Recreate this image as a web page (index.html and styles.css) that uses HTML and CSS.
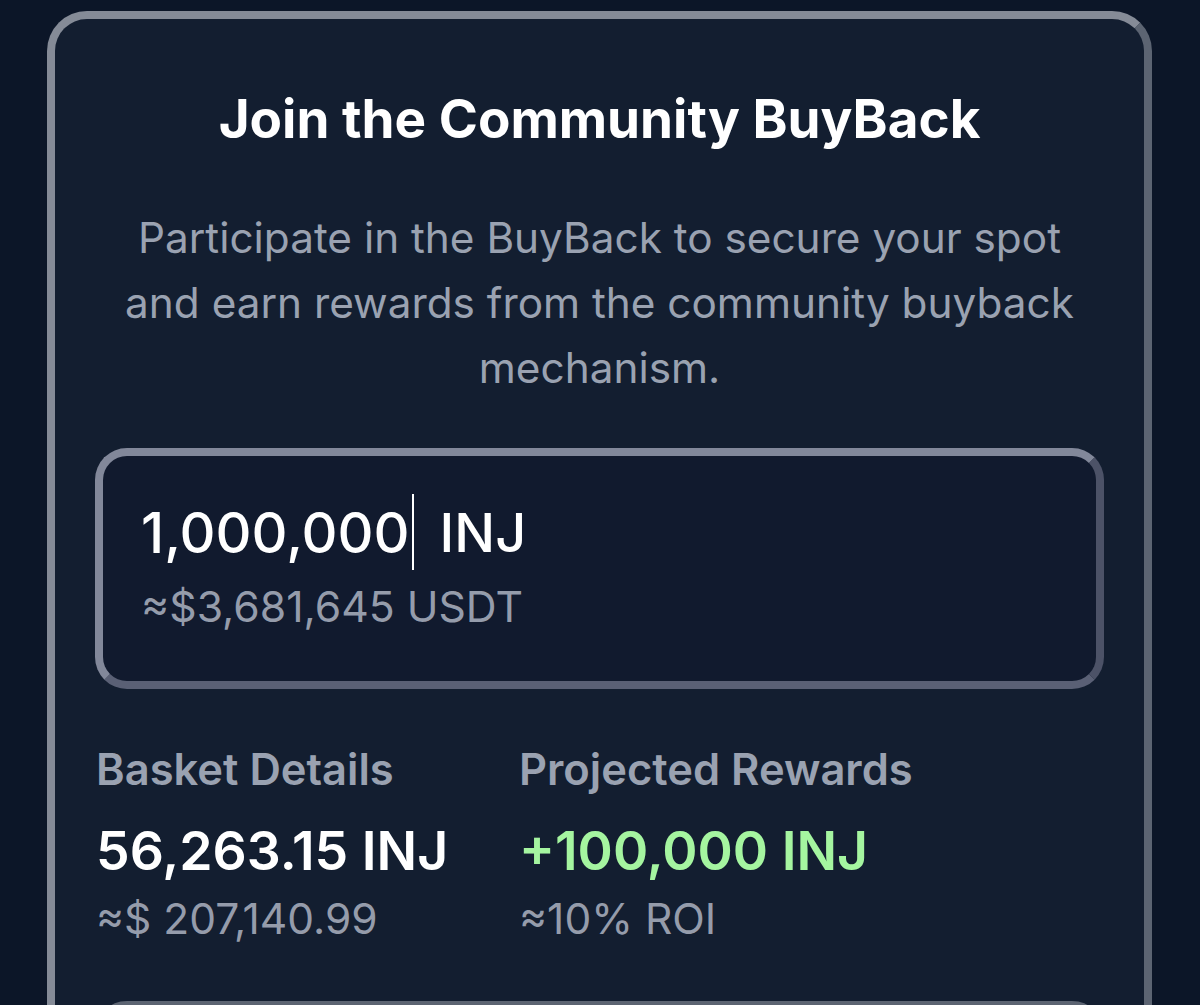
FILE: index.html
```html
<!DOCTYPE html>
<html>
<head>
<meta charset="utf-8">
<link rel="stylesheet" href="styles.css">
</head>
<body>
<div class="card">
  <h1 class="title">Join the Community BuyBack</h1>
  <p class="desc">Participate in the BuyBack to secure your spot and earn rewards from the community buyback mechanism.</p>
  <div class="input-box">
    <div class="amount-row"><span class="amount">1,000,000</span><span class="caret"></span><span class="unit">INJ</span></div>
    <div class="usd">≈$3,681,645 USDT</div>
  </div>
  <div class="stats">
    <div class="stat">
      <div class="stat-label">Basket Details</div>
      <div class="stat-value">56,263.15 INJ</div>
      <div class="stat-sub">≈$ 207,140.99</div>
    </div>
    <div class="stat">
      <div class="stat-label">Projected Rewards</div>
      <div class="stat-value green">+100,000 INJ</div>
      <div class="stat-sub">≈10% ROI</div>
    </div>
  </div>
  <div class="next-box"></div>
</div>
</body>
</html>
```

FILE: styles.css
```css
html, body {
  margin: 0;
  padding: 0;
  background: #0c1628;
  height: 1005px;
  overflow: hidden;
}
body {
  font-family: Inter, "Liberation Sans", sans-serif;
  padding: 11px 0 0 47px;
}
.card {
  box-sizing: border-box;
  width: 1105px;
  min-height: 1100px;
  border: 8px solid #858b97;
  border-right-color: #5c6472;
  border-bottom-color: #5c6472;
  border-radius: 40px;
  background: #131e30;
  padding: 68px 40px 0 40px;
}
.title {
  margin: 0;
  text-align: center;
  color: #ffffff;
  font-size: 53px;
  font-weight: 700;
  line-height: 64px;
}
.desc {
  margin: 54px auto 0;
  text-align: center;
  color: #9aa2b1;
  font-size: 42.3px;
  line-height: 65px;
  max-width: 960px;
}
.input-box {
  margin-top: 48px;
  border: 8px solid #82889a;
  border-right-color: #4c5267;
  border-bottom-color: #5a6075;
  border-radius: 32px;
  background: #111a2e;
  height: 241px;
  box-sizing: border-box;
  padding: 36px 38px 0 38px;
}
.amount-row {
  display: flex;
  align-items: center;
  height: 80px;
  color: #ffffff;
  font-size: 55.8px;
  font-weight: 500;
}
.caret {
  display: inline-block;
  width: 2px;
  height: 76px;
  background: #ffffff;
  margin: 0 26px 0 2px;
}
.unit {
  font-size: 54px;
}
.usd {
  margin-top: 7px;
  color: #959cab;
  font-size: 42.7px;
  line-height: 56px;
}
.stats {
  display: flex;
  margin-top: 49px;
  padding-left: 1px;
}
.stat {
  width: 423px;
}
.stat-label {
  color: #9aa2b1;
  font-size: 43.5px;
  font-weight: 600;
  line-height: 62px;
}
.stat-value {
  color: #ffffff;
  font-size: 53.5px;
  font-weight: 600;
  line-height: 78px;
  margin-top: 12px;
}
.stat-value.green {
  color: #a5f5a0;
}
.stat-sub {
  color: #959cab;
  font-size: 42.5px;
  line-height: 58px;
}
.next-box {
  margin-top: 53px;
  height: 120px;
  border: 8px solid #5c6472;
  border-radius: 32px;
}
```
